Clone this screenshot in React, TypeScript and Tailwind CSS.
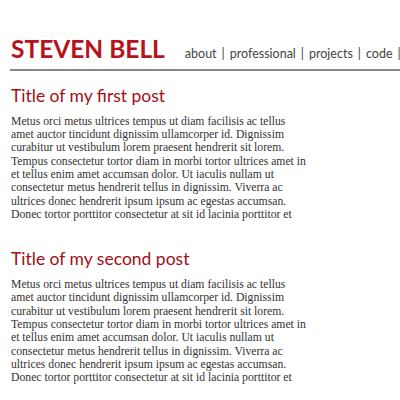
const lines = [
  "Metus orci metus ultrices tempus ut diam facilisis ac tellus",
  "amet auctor tincidunt dignissim ullamcorper id. Dignissim",
  "curabitur ut vestibulum lorem praesent hendrerit sit lorem.",
  "Tempus consectetur tortor diam in morbi tortor ultrices amet in",
  "et tellus enim amet accumsan dolor. Ut iaculis nullam ut",
  "consectetur metus hendrerit tellus in dignissim. Viverra ac",
  "ultrices donec hendrerit ipsum ipsum ac egestas accumsan.",
  "Donec tortor porttitor consectetur at sit id lacinia porttitor et",
];

const posts = ["Title of my first post", "Title of my second post"];
const nav = ["about", "professional", "projects", "code"];

export default function App() {
  return (
    <div className="h-[400px] w-[400px] overflow-hidden bg-white">
      {/* Header */}
      <header className="flex items-baseline whitespace-nowrap pl-[11px] pt-[36px] font-['Lato',sans-serif]">
        <h1 className="text-[24.5px] font-bold leading-[26px] text-[#b5121b]">STEVEN BELL</h1>
        <nav className="ml-[20px] flex text-[12.5px] text-[#444]">
          {nav.map((n) => (
            <span key={n}>
              {n}
              <span className="mx-[5px]">|</span>
            </span>
          ))}
        </nav>
      </header>
      <div className="ml-[10px] mt-[5px] h-[2px] bg-[#888]" />

      {/* Posts */}
      <main className="pl-[11px] pt-[14px]">
        {posts.map((t) => (
          <article key={t} className="mb-[27px]">
            <h2 className="font-['Lato',sans-serif] text-[17.5px] leading-[22px] text-[#a30f16]">{t}</h2>
            <div className="mt-[8px] font-['Liberation_Serif',serif] text-[11.7px] leading-[13.3px] text-[#333]">
              {lines.map((l) => (
                <p key={l} className="whitespace-nowrap">{l}</p>
              ))}
            </div>
          </article>
        ))}
      </main>
    </div>
  );
}
